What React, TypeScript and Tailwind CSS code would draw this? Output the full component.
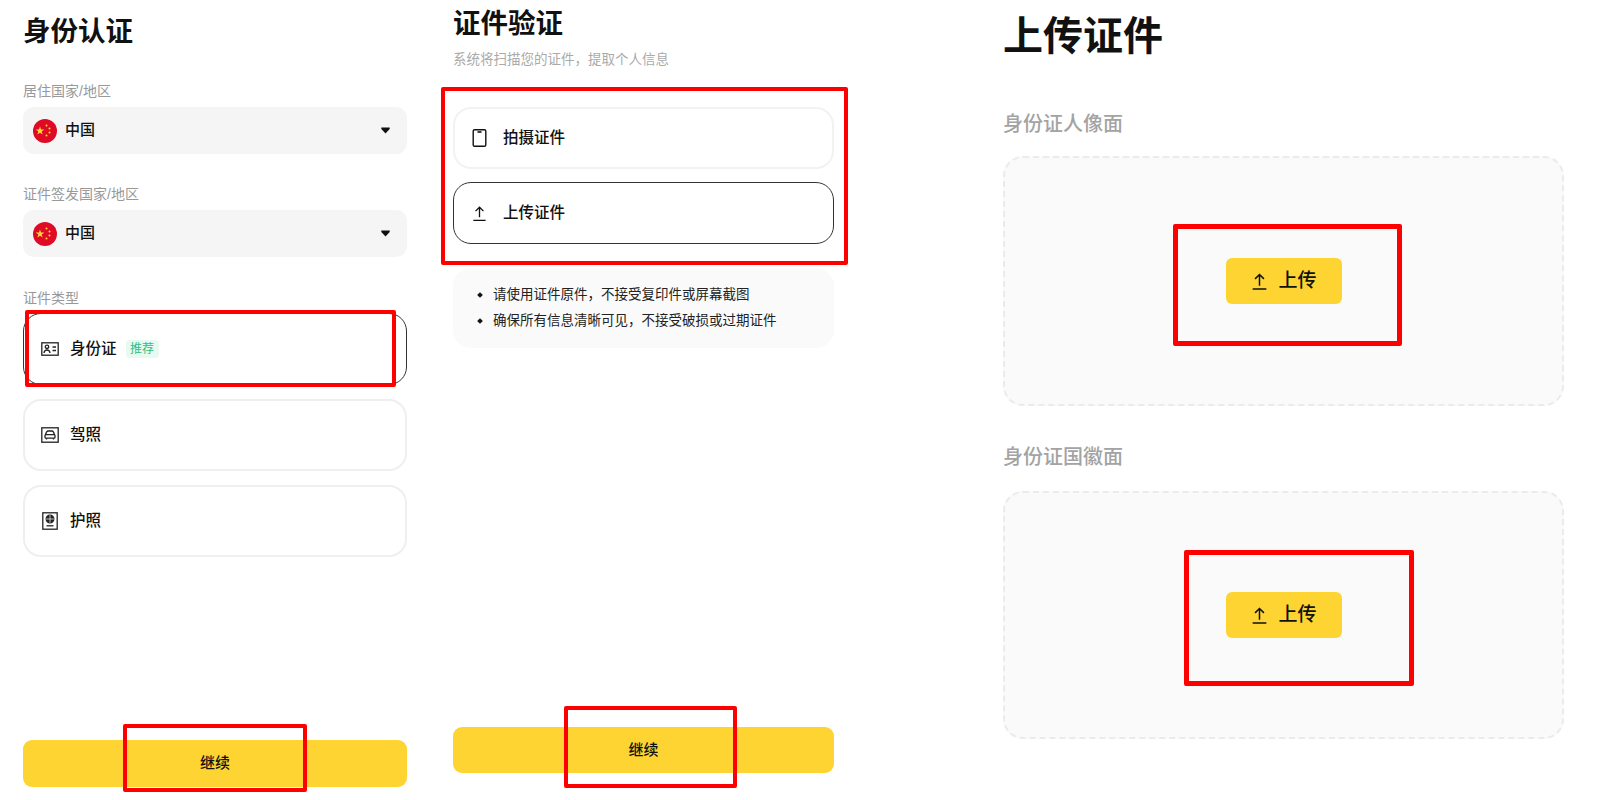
import React from 'react';

const UploadIcon = ({ size = 17 }: { size?: number }) => (
  <svg width={size} height={size} viewBox="0 0 18 18" fill="none" stroke="#111" strokeWidth="1.4">
    <path d="M9 13V2.5M4.8 6.5 9 2.3l4.2 4.2M2.5 16.2h13" />
  </svg>
);

const PhoneIcon = () => (
  <svg width="17" height="20" viewBox="0 0 17 20" fill="none" stroke="#111" strokeWidth="1.4">
    <rect x="2.2" y="1.7" width="12.6" height="16.6" rx="1.4" />
    <path d="M6.5 4h4" strokeWidth="1.6" />
  </svg>
);

const IdIcon = () => (
  <svg width="18" height="14" viewBox="0 0 18 14" fill="none" stroke="#222" strokeWidth="1.3">
    <rect x="0.8" y="0.8" width="16.4" height="12.4" />
    <circle cx="6" cy="4.8" r="1.7" />
    <path d="M3 11c.3-2.2 1.5-3 3-3s2.700.8 3 3M11.500 5h3.500M11.500 8.500h3.500" />
  </svg>
);

const CarIcon = () => (
  <svg width="18" height="16" viewBox="0 0 18 16" fill="none" stroke="#222" strokeWidth="1.3">
    <rect x="0.8" y="0.8" width="16.400" height="14.400" />
    <path d="M4.500 8c.6-2.700 1.300-4 2.500-4h4c1.200 0 1.900 1.300 2.500 4" />
    <rect x="4" y="7.600" width="10" height="3.600" rx="1" />
    <path d="M5.500 11.200v1.400M12.500 11.200v1.400" />
  </svg>
);

const PassportIcon = () => (
  <svg width="16" height="18" viewBox="0 0 16 18" fill="none" stroke="#222" strokeWidth="1.3">
    <rect x="0.8" y="0.8" width="14.400" height="16.400" />
    <circle cx="8" cy="7" r="3.800" fill="#222" />
    <path d="M4.200 7h7.600M8 3.200v7.600" stroke="#fff" strokeWidth="0.7" />
    <path d="M4.500 13.800h7" />
  </svg>
);

const ChinaFlag = () => (
  <svg width="24" height="24" viewBox="0 0 24 24">
    <circle cx="12" cy="12" r="12" fill="#DE0A26" />
    <path
      d="M7 7.500l1.050 3.100h3.250l-2.650 1.900 1 3.100L7 13.700l-2.650 1.900 1-3.100-2.650-1.900h3.250z"
      fill="#FFD83A"
    />
    <circle cx="13.500" cy="6.500" r="1" fill="#FFD83A" />
    <circle cx="16.500" cy="9.500" r="1" fill="#FFD83A" />
    <circle cx="16.500" cy="13.500" r="1" fill="#FFD83A" />
    <circle cx="13.500" cy="16.500" r="1" fill="#FFD83A" />
  </svg>
);

const Caret = () => (
  <svg width="9" height="7" viewBox="0 0 9 7">
    <path d="M0.300 0.500h8.400v1.500L4.500 6.500 0.300 2z" fill="#111" />
  </svg>
);

const CountrySelect = () => (
  <div className="mt-[6px] flex h-[47px] items-center rounded-[11px] bg-[#F5F5F5] pl-[10px] pr-[17px]">
    <ChinaFlag />
    <span className="ml-[8px] text-[15px] font-medium text-[#111]">中国</span>
    <span className="ml-auto flex">
      <Caret />
    </span>
  </div>
);

const Label = ({ children }: { children: React.ReactNode }) => (
  <div className="text-[14px] leading-[20px] text-[#999]">{children}</div>
);

const ContinueButton = ({ className }: { className: string }) => (
  <button
    className={`mt-auto flex w-full items-center justify-center rounded-[9px] bg-[#FDD432] text-[15px] font-medium text-[#111] ${className}`}
  >
    继续
  </button>
);

const UploadButton = () => (
  <button className="flex h-[46px] w-[116px] items-center justify-center gap-[9px] rounded-[6px] bg-[#FDD432] text-[19px] font-medium text-[#111]">
    <UploadIcon size={19} />
    上传
  </button>
);

export default function App() {
  return (
    <div className="relative flex h-[800px] w-[1600px] overflow-hidden bg-white font-['Liberation_Sans','Noto_Sans_CJK_SC',sans-serif]">
      {/* 身份认证 */}
      <div className="ml-[23px] flex h-full w-[384px] flex-col pb-[13px]">
        <h1 className="mt-[14px] text-[27.500px] font-semibold leading-[36px] text-[#111]">身份认证</h1>
        <div className="mt-[31px]">
          <Label>居住国家/地区</Label>
        </div>
        <CountrySelect />
        <div className="mt-[30px]">
          <Label>证件签发国家/地区</Label>
        </div>
        <CountrySelect />
        <div className="mt-[31px]">
          <Label>证件类型</Label>
        </div>
        <div className="mt-[5px] flex h-[72px] items-center rounded-[18px] border border-[#333] pl-[17px]">
          <span className="flex w-[18px] justify-center">
            <IdIcon />
          </span>
          <span className="ml-[11px] text-[15.500px] font-medium text-[#111]">身份证</span>
          <span className="ml-[9px] flex h-[18px] w-[33px] items-center justify-center rounded-[4px] bg-[#E8FAF0] text-[12px] text-[#2FBF80]">
            推荐
          </span>
        </div>
        <div className="mt-[14px] flex h-[72px] items-center rounded-[18px] border-2 border-[#EFEFEF] pl-[16px]">
          <span className="flex w-[18px] justify-center">
            <CarIcon />
          </span>
          <span className="ml-[11px] text-[15.500px] font-medium text-[#111]">驾照</span>
        </div>
        <div className="mt-[14px] flex h-[72px] items-center rounded-[18px] border-2 border-[#EFEFEF] pl-[16px]">
          <span className="flex w-[18px] justify-center">
            <PassportIcon />
          </span>
          <span className="ml-[11px] text-[15.500px] font-medium text-[#111]">护照</span>
        </div>
        <ContinueButton className="h-[47px]" />
      </div>

      {/* 证件验证 */}
      <div className="ml-[46px] flex h-full w-[381px] flex-col pb-[27px]">
        <h1 className="mt-[6px] text-[27.500px] font-semibold leading-[36px] text-[#111]">证件验证</h1>
        <p className="mt-[8px] text-[13.500px] leading-[20px] text-[#AAA]">系统将扫描您的证件，提取个人信息</p>
        <div className="mt-[37px] flex h-[62px] items-center rounded-[18px] border-2 border-[#F2F2F2] pl-[15px]">
          <span className="flex w-[18px] justify-center">
            <PhoneIcon />
          </span>
          <span className="ml-[15px] text-[15.500px] font-medium text-[#111]">拍摄证件</span>
        </div>
        <div className="mt-[13px] flex h-[62px] items-center rounded-[18px] border border-[#333] pl-[16px]">
          <span className="flex w-[18px] justify-center">
            <UploadIcon />
          </span>
          <span className="ml-[15px] text-[15.500px] font-medium text-[#111]">上传证件</span>
        </div>
        <ul className="mt-[24px] flex h-[80px] flex-col justify-center gap-[6px] rounded-[18px] bg-[#FAFAFA] pl-[25px] text-[13.500px] leading-[20px] text-[#222]">
          <li className="flex items-center">
            <span className="mr-[11px] size-[4px] rotate-45 bg-[#111]" />
            请使用证件原件，不接受复印件或屏幕截图
          </li>
          <li className="flex items-center">
            <span className="mr-[11px] size-[4px] rotate-45 bg-[#111]" />
            确保所有信息清晰可见，不接受破损或过期证件
          </li>
        </ul>
        <ContinueButton className="h-[46px]" />
      </div>

      {/* 上传证件 */}
      <div className="ml-[169px] flex h-full w-[561px] flex-col">
        <h1 className="mt-[9px] text-[40px] font-semibold leading-[54px] text-[#111]">上传证件</h1>
        <div className="mt-[47px] text-[20px] font-medium leading-[28px] text-[#A3A3A3]">身份证人像面</div>
        <div className="mt-[18px] flex h-[250px] items-center justify-center rounded-[20px] border-2 border-dashed border-[#EBEBEB] bg-[#FAFAFA]">
          <UploadButton />
        </div>
        <div className="mt-[37px] text-[20px] font-medium leading-[28px] text-[#A3A3A3]">身份证国徽面</div>
        <div className="mt-[20px] flex h-[248px] items-center justify-center rounded-[20px] border-2 border-dashed border-[#EBEBEB] bg-[#FAFAFA]">
          <UploadButton />
        </div>
      </div>

      {/* 红色标注框 */}
      <div className="absolute left-[25px] top-[310px] h-[77px] w-[371px] rounded-[2px] border-[4px] border-[#FF0000]" />
      <div className="absolute left-[123px] top-[724px] h-[68px] w-[184px] rounded-[2px] border-[4px] border-[#FF0000]" />
      <div className="absolute left-[441px] top-[87px] h-[178px] w-[407px] rounded-[2px] border-[4px] border-[#FF0000]" />
      <div className="absolute left-[564px] top-[706px] h-[82px] w-[173px] rounded-[2px] border-[4px] border-[#FF0000]" />
      <div className="absolute left-[1173px] top-[224px] h-[122px] w-[229px] rounded-[2px] border-[5px] border-[#FF0000]" />
      <div className="absolute left-[1184px] top-[550px] h-[136px] w-[230px] rounded-[2px] border-[5px] border-[#FF0000]" />
    </div>
  );
}
